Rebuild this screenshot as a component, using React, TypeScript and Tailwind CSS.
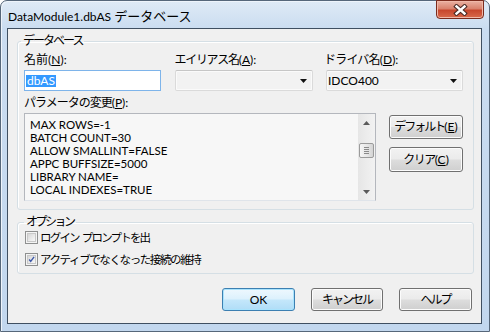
import React from 'react'

// パラメータの初期値
const params = [
  'MAX ROWS=-1',
  'BATCH COUNT=30',
  'ALLOW SMALLINT=FALSE',
  'APPC BUFFSIZE=5000',
  'LIBRARY NAME=',
  'LOCAL INDEXES=TRUE',
]

function Key({ k }: { k: string }) {
  return (
    <span className="tracking-normal">
      (<span className="underline underline-offset-[1px]">{k}</span>)
    </span>
  )
}

function Button({ children, primary = false }: { children: React.ReactNode; primary?: boolean }) {
  const skin = primary
    ? 'border-[#3c7fb1] bg-[linear-gradient(to_bottom,#eef8fe_0%,#dcf1fd_48%,#c4e7fb_52%,#b0ddf7_100%)] shadow-[inset_0_0_0_1px_#a9e3fd]'
    : 'border-[#707070] bg-[linear-gradient(to_bottom,#f2f2f2_0%,#ebebeb_48%,#dddddd_52%,#cfcfcf_100%)] shadow-[inset_0_0_0_1px_#fcfcfc]'
  return (
    <div className={`flex h-full w-full items-center justify-center rounded-[3px] border text-[12px] leading-none ${skin}`}>
      {children}
    </div>
  )
}

function Combo({ value }: { value?: string }) {
  return (
    <div className="flex h-[21px] items-center justify-between rounded-[2px] border border-[#dadada] border-t-[#c6c6c6] bg-[#f2f2f2] pl-[1px] pr-[5px] shadow-[inset_0_0_0_1px_#fafafa]">
      <span className="text-[12px] leading-none">{value}</span>
      <svg width="7" height="4" viewBox="0 0 7 4">
        <path d="M0 0h7L3.5 4z" fill="#111" />
      </svg>
    </div>
  )
}

function Check({ checked, children }: { checked?: boolean; children: React.ReactNode }) {
  return (
    <div className="flex h-[15px] items-center">
      <div className="ml-[1px] flex h-[13px] w-[13px] items-center justify-center border border-[#8e8f8f] bg-[#f4f4f4]">
        <div className="flex h-[9px] w-[9px] items-center justify-center border border-[#c8c8c8] bg-[linear-gradient(135deg,#d6d6d6,#f8f8f8)]">
          {checked && (
            <svg width="9" height="9" viewBox="0 0 9 9">
              <path d="M1.5 4.5 3.5 7 7.8 1.2" fill="none" stroke="#3d58a8" strokeWidth="1.8" />
            </svg>
          )}
        </div>
      </div>
      <div className="ml-[2px] whitespace-nowrap text-[11.5px] leading-none">{children}</div>
    </div>
  )
}

export default function App() {
  return (
    <div className="h-[332px] w-[490px] text-[#000] [font-family:Lato,Noto_Sans_CJK_JP,sans-serif]">
      <div className="flex h-full w-full flex-col rounded-t-[7px] border border-[#56677a] bg-[linear-gradient(to_bottom,#dfeaf6_0%,#cadcf0_28px,#c2d7ee_100%)] shadow-[inset_1px_1px_0_#eef4fb]">
        {/* タイトルバー */}
        <div className="flex h-[27px] items-start justify-between pl-[7px] pr-[5px]">
          <div className="mt-[7px] whitespace-nowrap leading-[14px]">
            <span className="text-[12px]">DataModule1.dbAS </span>
            <span className="text-[13px]">データベース</span>
          </div>
          <div className="-mt-px flex h-[19px] w-[48px] items-center justify-center rounded-b-[4px] border border-[#7b2b1d] bg-[linear-gradient(to_bottom,#eab1a2_0%,#d9826d_45%,#c7472d_55%,#d96a4c_100%)] shadow-[inset_0_0_0_1px_#f0b8a8]">
            <svg width="15" height="12" viewBox="0 0 15 12">
              <path d="M3.5 2.5l8 7M11.5 2.5l-8 7" stroke="#4a2a25" strokeWidth="4.5" strokeLinecap="square" />
              <path d="M3.5 2.5l8 7M11.5 2.5l-8 7" stroke="#fff" strokeWidth="2.4" strokeLinecap="square" />
            </svg>
          </div>
        </div>

        {/* クライアント領域 */}
        <div className="ml-[6px] h-[296px] w-[475px] border border-[#3f4f61] bg-[#f0f0f0]">
          <fieldset className="ml-[9px] mt-[5px] w-[457px] rounded-[3px] border border-[#d5dfe5] pb-[8px] pl-[6px] pr-[10px] pt-[5px] shadow-[inset_1px_1px_0_#fff]">
            <legend className="-ml-[3px] px-[2px] text-[12px] leading-[14px] tracking-[-2px]">データベース</legend>
            <div className="flex justify-between text-[12px]">
              <div className="flex w-[137px] flex-col">
                <div className="h-[14px] leading-[14px]">
                  名前<Key k="N" />:
                </div>
                <div className="mt-[3px] flex h-[21px] items-center border border-[#7eb4ea] bg-white">
                  <span className="ml-[1px] bg-[#3399ff] px-[1px] leading-[12px] text-white">dbAS</span>
                </div>
              </div>
              <div className="flex w-[138px] flex-col">
                <div className="h-[14px] leading-[14px]">
                  <span className="tracking-[-1.3px]">エイリアス名</span>
                  <Key k="A" />:
                </div>
                <div className="mt-[3px]">
                  <Combo />
                </div>
              </div>
              <div className="flex w-[137px] flex-col">
                <div className="-ml-[2px] h-[14px] leading-[14px]">
                  <span className="tracking-[-0.8px]">ドライバ名</span>
                  <Key k="D" />:
                </div>
                <div className="mt-[3px]">
                  <Combo value="IDCO400" />
                </div>
              </div>
            </div>

            <div className="mt-[5px] h-[14px] text-[12px] leading-[14px]">
              <span className="tracking-[-1px]">パラメータの変更</span>
              <Key k="P" />:
            </div>

            <div className="mt-[3px] flex justify-between">
              <div className="flex h-[88px] w-[352px] border border-[#b4b7bd] border-b-[#dfe4ea] bg-[#f7f7f7]">
                <div className="flex-1 pl-[5px] pt-[4px] text-[11.5px] leading-[13px]">
                  {params.map((p) => (
                    <div key={p} className="whitespace-nowrap">
                      {p}
                    </div>
                  ))}
                </div>
                <div className="flex w-[17px] flex-col items-center bg-[linear-gradient(to_right,#e6e6e6,#f2f2f2)]">
                  <div className="flex h-[17px] w-full items-center justify-center">
                    <svg width="7" height="4" viewBox="0 0 7 4">
                      <path d="M3.5 0 7 4H0z" fill="#5a5a5a" />
                    </svg>
                  </div>
                  <div className="mt-[12px] flex h-[15px] w-[15px] items-center justify-center rounded-[2px] border border-[#9b9b9b] bg-[linear-gradient(to_right,#f6f6f6,#e4e4e4_60%,#d4d4d4)]">
                    <div className="flex h-[7px] w-[5px] flex-col justify-between">
                      <div className="h-px bg-[#8a8a8a]" />
                      <div className="h-px bg-[#8a8a8a]" />
                      <div className="h-px bg-[#8a8a8a]" />
                      <div className="h-px bg-[#8a8a8a]" />
                    </div>
                  </div>
                  <div className="flex-1" />
                  <div className="flex h-[17px] w-full items-center justify-center">
                    <svg width="7" height="4" viewBox="0 0 7 4">
                      <path d="M0 0h7L3.5 4z" fill="#5a5a5a" />
                    </svg>
                  </div>
                </div>
              </div>
              <div className="mt-[2px] flex w-[74px] flex-col gap-[8px]">
                <div className="h-[24px]">
                  <Button>
                    <span className="tracking-[-2px]">デフォルト</span>
                    <Key k="E" />
                  </Button>
                </div>
                <div className="h-[25px]">
                  <Button>
                    <span className="tracking-[-1.5px]">クリア</span>
                    <Key k="C" />
                  </Button>
                </div>
              </div>
            </div>
          </fieldset>

          <fieldset className="ml-[9px] mt-[5px] w-[457px] rounded-[3px] border border-[#d5dfe5] pb-[6px] pl-[6px] pr-[10px] pt-[1px] shadow-[inset_1px_1px_0_#fff]">
            <legend className="px-[2px] text-[12px] leading-[14px] tracking-[-2.5px]">オプション</legend>
            <div className="flex flex-col gap-[7px]">
              <Check>
                <span className="tracking-[-1.8px]">ログイン</span>
                <span> </span>
                <span className="tracking-[-1.8px]">プロンプトを出</span>
              </Check>
              <Check checked>
                <span className="tracking-[-1.4px]">アクティブでなくなった接続の維持</span>
              </Check>
            </div>
          </fieldset>

          <div className="mt-[14px] flex justify-end gap-[16px] pr-[9px]">
            <div className="h-[23px] w-[73px]">
              <Button primary>OK</Button>
            </div>
            <div className="h-[23px] w-[72px]">
              <Button>
                <span className="tracking-[-2px]">キャンセル</span>
              </Button>
            </div>
            <div className="h-[23px] w-[73px]">
              <Button>
                <span className="tracking-[-2px]">ヘルプ</span>
              </Button>
            </div>
          </div>
        </div>
      </div>
    </div>
  )
}
